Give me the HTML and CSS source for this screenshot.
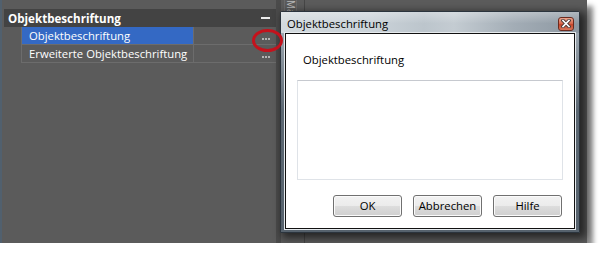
FILE: index.html
```html
<!DOCTYPE html>
<html>
<head>
    <link rel="stylesheet" href="styles.css">
</head>
<body>
    <div class="screen">
        <div class="palette">
            <div class="cat-head">
                <span>Objektbeschriftung</span>
                <span class="collapse"></span>
            </div>
            <div class="prop-list">
                <div class="prop-row selected">
                    <div class="prop-name">Objektbeschriftung</div>
                    <div class="prop-value"><span class="dots"></span></div>
                </div>
                <div class="prop-row">
                    <div class="prop-name">Erweiterte Objektbeschriftung</div>
                    <div class="prop-value"><span class="dots"></span></div>
                </div>
            </div>
        </div>
        <div class="splitter"></div>
        <div class="dock">
            <div class="dock-tab">Markierung</div>
        </div>
        <div class="workspace"></div>

        <div class="dialog">
            <div class="titlebar">
                <span class="title">Objektbeschriftung</span>
                <span class="close-btn">
                    <svg width="10" height="9" viewBox="0 0 10 9">
                        <path d="M2 1.5 L8 7.5 M8 1.5 L2 7.5" stroke="#4a3a36" stroke-width="3.4" stroke-linecap="square"/>
                        <path d="M2 1.5 L8 7.5 M8 1.5 L2 7.5" stroke="#fff" stroke-width="1.6" stroke-linecap="square"/>
                    </svg>
                </span>
            </div>
            <div class="client">
                <div class="field-label">Objektbeschriftung</div>
                <div class="textbox"></div>
                <div class="buttons">
                    <div class="btn">OK</div>
                    <div class="btn">Abbrechen</div>
                    <div class="btn">Hilfe</div>
                </div>
            </div>
        </div>

        <!-- red marker round the "..." button -->
        <div class="callout"></div>
    </div>
</body>
</html>
```

FILE: styles.css
```css
body {
    margin: 0;
    background-color: white;
    font-family: "Open Sans", "Noto Sans", sans-serif;
}

.screen {
    position: relative;
    display: flex;
    width: 587px;
    height: 243px;
    background-color: #5b5b5b;
    box-shadow: inset 2px 0 #51606e, 6px 6px 5px rgba(0, 0, 0, 0.45);
}

/* property palette */

.palette {
    width: 276px;
    flex-shrink: 0;
    padding: 9px 0 0 4px;
    box-sizing: border-box;
}

.cat-head {
    display: flex;
    justify-content: space-between;
    align-items: center;
    height: 18px;
    padding: 0 6px 0 4px;
    background-color: #434343;
    color: white;
    font-size: 11.6px;
    font-weight: bold;
}

.collapse {
    width: 9px;
    height: 2px;
    background-color: #ececec;
}

.prop-list {
    margin-left: 17px;
    border-left: 1px solid #6c6c6c;
}

.prop-row {
    display: flex;
    height: 17px;
    border-bottom: 1px solid #6c6c6c;
}

.prop-name {
    width: 164px;
    padding-left: 7px;
    border-right: 1px solid #6c6c6c;
    color: white;
    font-size: 11.3px;
    line-height: 17px;
    white-space: nowrap;
}

.selected .prop-name {
    background-color: #3469c4;
}

.prop-value {
    flex: 1;
    display: flex;
    justify-content: flex-end;
    align-items: center;
    padding-right: 6px;
}

.dots {
    width: 8px;
    height: 2px;
    margin-top: 6px;
    background: repeating-linear-gradient(to right, #b4b4b4 0 2px, transparent 2px 3px);
}

.splitter {
    width: 5px;
    flex-shrink: 0;
    background-color: #4b4b4b;
}

.dock {
    width: 23px;
    flex-shrink: 0;
    border-right: 1px solid #464646;
}

.dock-tab {
    margin: 0 0 0 3px;
    width: 11px;
    height: 60px;
    border: 1px solid #6a6a6a;
    border-top: none;
    writing-mode: vertical-rl;
    color: #b8b8b8;
    font-size: 10px;
    line-height: 11px;
    overflow: hidden;
}

.workspace {
    flex: 1;
}

/* dialog window */

.dialog {
    position: absolute;
    left: 280px;
    top: 11px;
    width: 300px;
    height: 222px;
    box-sizing: border-box;
    display: flex;
    flex-direction: column;
    padding: 0 4px 3px 4px;
    border: 1px solid #2b343d;
    border-radius: 2px 2px 0 0;
    background: linear-gradient(#aeb8c1, #5b6772 45%, #56626d);
    box-shadow: 4px 3px 9px 2px rgba(0, 0, 0, 0.6);
}

.titlebar {
    display: flex;
    justify-content: space-between;
    align-items: center;
    height: 21px;
    margin: 0 -4px;
    padding: 0 5px 0 6px;
    background:
        linear-gradient(rgba(255, 255, 255, 0.3), rgba(255, 255, 255, 0) 55%),
        linear-gradient(to right, #d3dade 0%, #cbd3d9 30%, #bcc5cc 48%, #c4ccd2 58%, #a3adb6 78%, #8c97a1 100%);
}

.title {
    color: black;
    font-size: 11.3px;
    padding-top: 1px;
}

.close-btn {
    display: flex;
    justify-content: center;
    align-items: center;
    width: 14px;
    height: 12px;
    margin-top: 2px;
    border: 1px solid #6b2a1e;
    border-radius: 3px;
    background: linear-gradient(#eba58f, #d86a4f 45%, #c5452b 55%, #d8785c);
}

.client {
    flex: 1;
    display: flex;
    flex-direction: column;
    border: 1px solid #111;
    box-shadow: 0 0 0 1px #e6eaed;
    background-color: white;
}

.field-label {
    margin: 17px 0 0 17px;
    height: 17px;
    color: black;
    font-size: 11.3px;
    line-height: 17px;
}

.textbox {
    height: 98px;
    margin: 12px 11px 0 11px;
    border: 1px solid #dfe3e8;
    border-top-color: #c6c9cf;
}

.buttons {
    display: flex;
    justify-content: flex-end;
    gap: 11px;
    margin: 15px 12px 0 0;
}

.btn {
    width: 67px;
    height: 20px;
    border: 1px solid #707070;
    border-radius: 3px;
    background: linear-gradient(#f2f2f2, #ebebeb 50%, #dddddd 50%, #cfcfcf);
    box-shadow: inset 0 0 0 1px #fbfbfb;
    color: black;
    font-size: 11.3px;
    line-height: 20px;
    text-align: center;
}

.callout {
    position: absolute;
    left: 252px;
    top: 29px;
    width: 31px;
    height: 23px;
    box-sizing: border-box;
    border: 3px solid #c4121c;
    border-radius: 50%;
}
```
